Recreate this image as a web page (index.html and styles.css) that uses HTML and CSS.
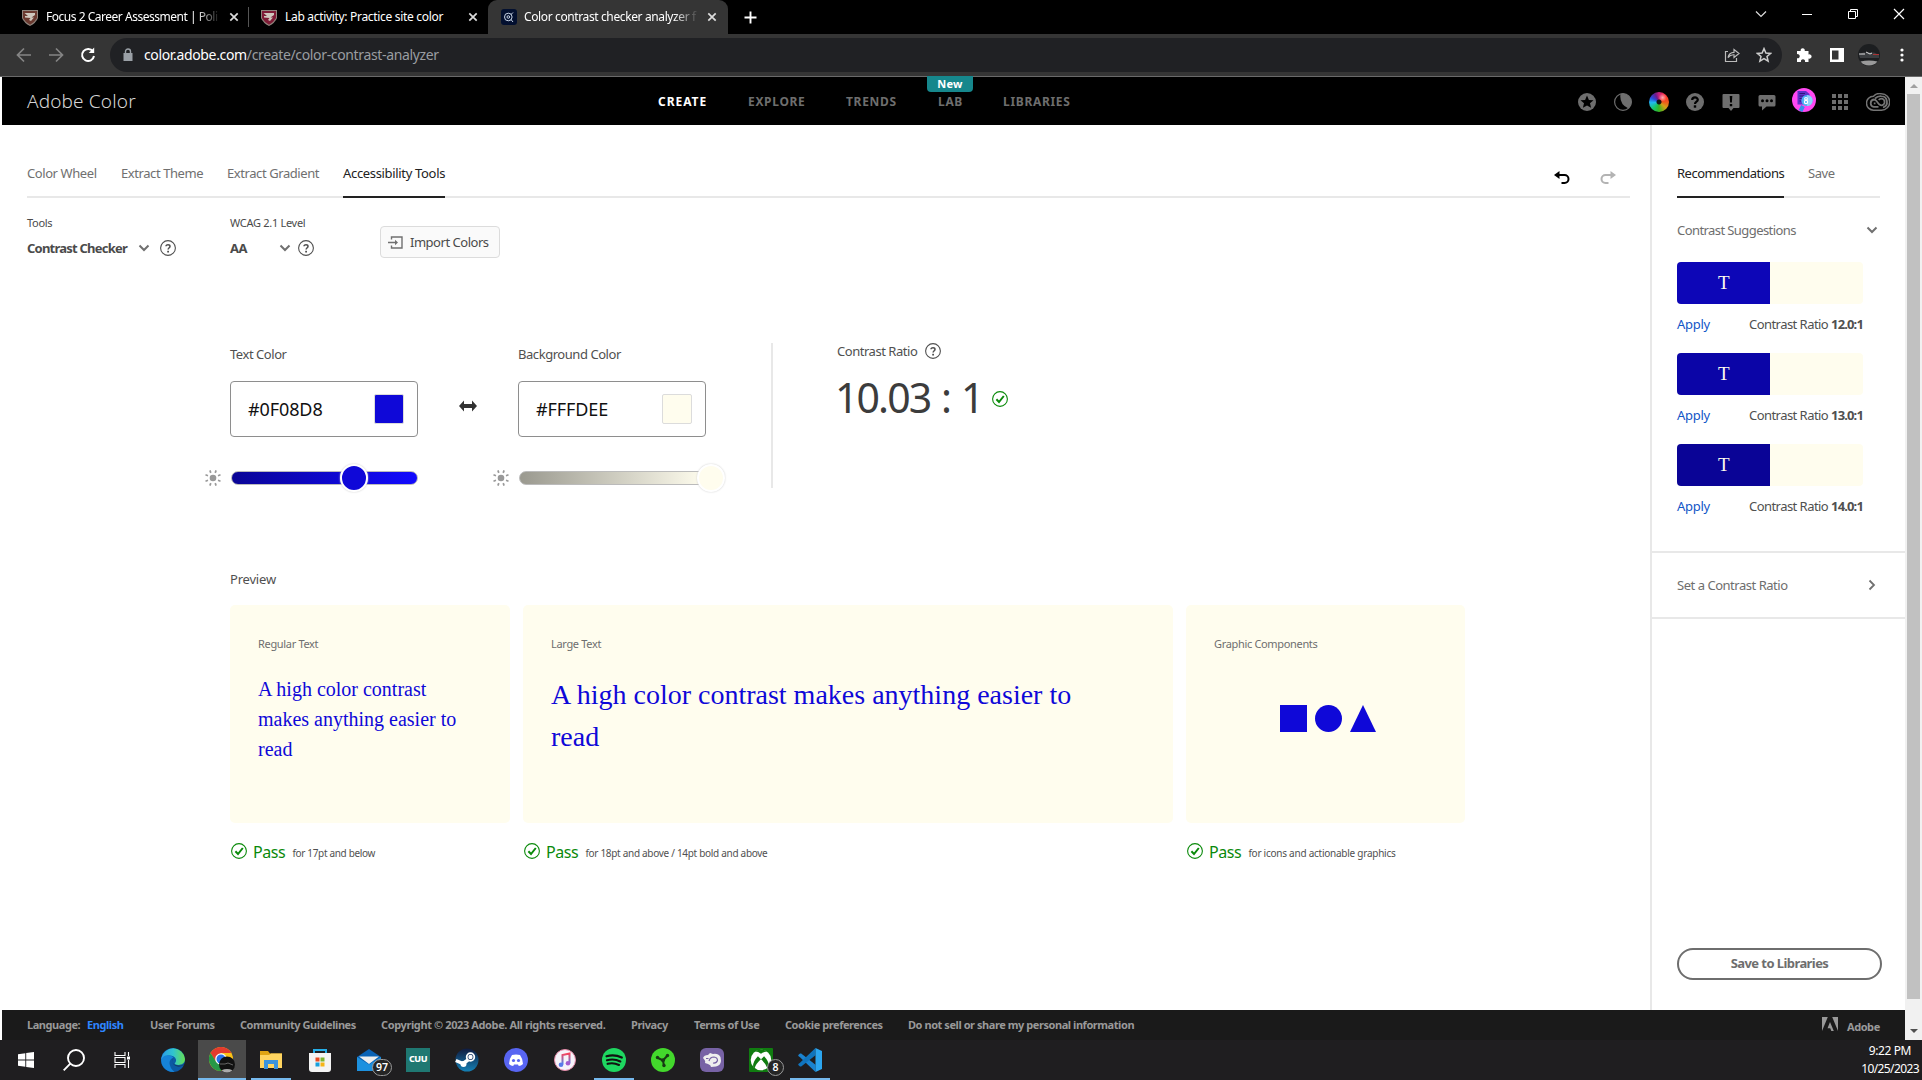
FILE: index.html
```html
<!DOCTYPE html>
<html lang="en">
<head>
<meta charset="utf-8">
<title>Color contrast checker analyzer</title>
<link rel="stylesheet" href="styles.css">
</head>
<body>
<svg width="0" height="0" class="defs">
  <symbol id="help" viewBox="0 0 16 16"><circle cx="8" cy="8" r="7.4" fill="none" stroke="#505050" stroke-width="1.1"/><path d="M6 6.3C6 4.3 10 4.3 10 6.4C10 7.7 8.1 7.8 8.1 9.6" fill="none" stroke="#505050" stroke-width="1.5"/><rect x="7.2" y="10.8" width="1.8" height="1.7" fill="#505050"/></symbol>
  <symbol id="check" viewBox="0 0 16 16"><circle cx="8" cy="8" r="7.4" fill="none" stroke="#0a8a0a" stroke-width="1.1"/><path d="M4.4 8.3L7 11L11.8 5" fill="none" stroke="#0a8a0a" stroke-width="2"/></symbol>
  <symbol id="chev" viewBox="0 0 12 8"><path d="M1.5 1.5L6 6L10.5 1.5" fill="none" stroke="#707070" stroke-width="2"/></symbol>
  <symbol id="sun" viewBox="0 0 16 16"><circle cx="8" cy="8" r="3.3" fill="#999"/><g stroke="#999" stroke-width="1.7"><path d="M5.8 2.9L4.9 .4M10.2 2.9L11.1 .4M13 5.700L15.500 4.800M13 10.300L15.500 11.200M3 5.700L.5 4.800M3 10.300L.5 11.200M5.800 13.100L4.900 15.600M10.200 13.100L11.100 15.600"/></g></symbol>
  <symbol id="x" viewBox="0 0 10 10"><path d="M1.3 1.3L8.7 8.7M8.7 1.3L1.3 8.7" stroke="currentColor" stroke-width="1.7"/></symbol>
  <symbol id="shield" viewBox="0 0 16 17"><path d="M0 1H16V9Q14 14 8 17Q2 14 0 9Z" fill="#8f857d"/><path d="M1 2H15V9Q13 13 8 15.800Q3 13 1 9Z" fill="currentColor"/><path d="M2.500 4H13V6L9.500 8.500H12L9 12L7 11L8.500 9L3 8.500V7H6Z" fill="#cfc8be"/></symbol>
</svg>

<header class="tabstrip">
  <div class="tab">
    <svg class="fav brown" width="16" height="17"><use href="#shield"/></svg>
    <span class="tab-title fade t1">Focus 2 Career Assessment | Poli</span>
    <svg class="close" width="10" height="10"><use href="#x"/></svg>
  </div>
  <div class="tab second">
    <svg class="fav red" width="16" height="17"><use href="#shield"/></svg>
    <span class="tab-title t2">Lab activity: Practice site color</span>
    <svg class="close" width="10" height="10"><use href="#x"/></svg>
  </div>
  <div class="tab active">
    <svg class="fav" width="16" height="16" viewBox="0 0 16 16"><rect width="16" height="16" rx="3" fill="#031030"/><circle cx="7.300" cy="8" r="3.800" fill="none" stroke="#c9d6e8" stroke-width="1"/><circle cx="7.300" cy="8" r="1.300" fill="none" stroke="#c9d6e8"/><path d="M10 5.500L12 3.500M10 10.500L12 13" stroke="#c9d6e8"/></svg>
    <span class="tab-title fade t3">Color contrast checker analyzer f</span>
    <svg class="close" width="10" height="10"><use href="#x"/></svg>
  </div>
  <svg class="newtab" width="13" height="13" viewBox="0 0 13 13"><path d="M6.500 0.500V12.500M.5 6.500H12.500" stroke="#fff" stroke-width="1.900"/></svg>
  <div class="winbtns">
    <svg width="12" height="12" viewBox="0 0 12 12"><path d="M1 3.500L6 8.500L11 3.500" fill="none" stroke="#ddd" stroke-width="1.200"/></svg>
    <svg width="12" height="12" viewBox="0 0 12 12"><path d="M1 6.500H11" stroke="#fff"/></svg>
    <svg width="12" height="12" viewBox="0 0 12 12"><path d="M1.500 3.500H8.500V10.500H1.500ZM3.500 3.500V1.500H10.500V8.500H8.500" fill="none" stroke="#fff"/></svg>
    <svg width="12" height="12" viewBox="0 0 12 12"><path d="M1 1L11 11M11 1L1 11" stroke="#fff" stroke-width="1.200"/></svg>
  </div>
</header>

<div class="toolbar">
  <svg width="16" height="16" viewBox="0 0 16 16" fill="none" stroke="#858585" stroke-width="1.700"><path d="M15 8H2M8 1.500L1.500 8L8 14.500"/></svg>
  <svg width="16" height="16" viewBox="0 0 16 16" fill="none" stroke="#858585" stroke-width="1.700"><path d="M1 8H14M8 1.500L14.500 8L8 14.500"/></svg>
  <svg width="16" height="16" viewBox="0 0 16 16" fill="none" stroke="#fff" stroke-width="2"><path d="M13 4.500A6 6 0 1 0 14 9"/><path d="M14.200 .5V6H8.700Z" fill="#fff" stroke="none"/></svg>
  <div class="omnibox">
    <svg width="12" height="14" viewBox="0 0 12 14"><path d="M1.500 5H10.500V13H1.500Z" fill="#9aa0a6"/><path d="M3.500 6V3.500A2.500 2.500 0 0 1 8.500 3.500V6" fill="none" stroke="#9aa0a6" stroke-width="1.400"/></svg>
    <span class="url"><b>color.adobe.com</b>/create/color-contrast-analyzer</span>
    <svg class="share" width="16" height="16" viewBox="0 0 16 16" fill="none" stroke="#bbb" stroke-width="1.200"><path d="M4 4.500H1.500V14.500H12.500V11M4 10.500Q5 5.500 10 5.300V2.500L15 6.500L10 10.500V7.800Q6.500 7.500 4 10.500Z"/></svg>
    <svg width="16" height="16" viewBox="0 0 16 16" fill="none" stroke="#ccc" stroke-width="1.500"><path d="M8 1.600L9.900 6L14.600 6.400L11 9.500L12.100 14.100L8 11.600L3.900 14.100L5 9.500L1.400 6.400L6.100 6Z"/></svg>
  </div>
  <svg width="16" height="16" viewBox="0 0 16 16" fill="#fff"><path d="M1 4H4.700A2.100 2.100 0 1 1 8.700 4H12.500V7.500A2.200 2.200 0 1 1 12.500 11.500V15H9A2.100 2.100 0 1 0 5 15H1V11.200A2.100 2.100 0 1 0 1 7.200Z"/></svg>
  <svg width="14" height="14" viewBox="0 0 14 14"><path d="M0 0H14V14H0ZM2 2.500V11.500H8.500V2.500Z" fill="#fff" fill-rule="evenodd"/></svg>
  <svg width="22" height="22" viewBox="0 0 22 22"><circle cx="11" cy="11" r="11" fill="#1c1e20"/><path d="M2.500 17.500A11 11 0 0 0 19.500 17.500Q11 15.500 2.500 17.500Z" fill="#9a9a9a"/><path d="M1 11L5 8.500H16L21 11V14L2 14Z" fill="#3a3d40"/><path d="M1 10H7M8 8L12 10L14 9" stroke="#ddd" fill="none"/><path d="M15 10.500H21" stroke="#a33"/></svg>
  <svg width="4" height="14" viewBox="0 0 4 14" fill="#fff"><circle cx="2" cy="2" r="1.600"/><circle cx="2" cy="7" r="1.600"/><circle cx="2" cy="12" r="1.600"/></svg>
</div>

<div class="viewport">
<div class="page">
  <header class="appbar">
    <span class="brand">Adobe Color</span>
    <nav class="nav">
      <span class="on">CREATE</span><span>EXPLORE</span><span>TRENDS</span><span class="lab">LAB<i class="new">New</i></span><span>LIBRARIES</span>
    </nav>
    <div class="appicons">
      <svg width="18" height="18" viewBox="0 0 18 18"><circle cx="9" cy="9" r="9" fill="#6e6e6e"/><path d="M9 2.500L10.900 6.900L15.500 7.200L12 10.200L13.100 14.800L9 12.400L4.900 14.800L6 10.200L2.500 7.200L7.100 6.900Z" fill="#000"/></svg>
      <svg width="18" height="18" viewBox="0 0 18 18"><circle cx="9" cy="9" r="8.400" fill="none" stroke="#6e6e6e" stroke-width="1.200"/><path d="M6.500 .8A8.600 8.600 0 0 1 14.500 15.500Q5 11.500 6.500 .8Z" fill="#6e6e6e"/></svg>
      <div class="wheel"></div>
      <svg width="18" height="18" viewBox="0 0 18 18"><circle cx="9" cy="9" r="9" fill="#6e6e6e"/><path d="M6.200 7C6.200 3.600 11.800 3.600 11.800 6.800C11.800 8.800 9 8.600 9 11" fill="none" stroke="#000" stroke-width="2.200"/><rect x="7.800" y="12.300" width="2.400" height="2.400" fill="#000"/></svg>
      <svg width="18" height="18" viewBox="0 0 18 18"><path d="M1.500 1H16.500Q17.500 1 17.500 2V14Q17.500 15 16.500 15H11.500L9 18L6.500 15H1.500Q.5 15 .5 14V2Q.5 1 1.500 1Z" fill="#6e6e6e"/><path d="M7.700 3H10.300L9.900 9.500H8.100ZM7.800 11H10.200V13.300H7.800Z" fill="#000"/></svg>
      <svg width="18" height="18" viewBox="0 0 18 18"><path d="M2 2H16Q17.500 2 17.500 3.500V12Q17.500 13.500 16 13.500H8.500L4 17.500V13.500H2Q.5 13.500 .5 12V3.500Q.5 2 2 2Z" fill="#6e6e6e"/><circle cx="4.500" cy="7.700" r="1.500"/><circle cx="9" cy="7.700" r="1.500"/><circle cx="13.500" cy="7.700" r="1.500"/></svg>
      <svg class="avatar" width="24" height="24" viewBox="0 0 24 24"><circle cx="12" cy="12" r="12" fill="#ff48f2"/><path d="M5.500 3H14L17.500 6V16.500H5.500Z" fill="#5f32c9"/><path d="M7.500 5.500H13M7.500 8H12M7.500 10.500H10M7.500 13H9" stroke="#2b1679"/><path d="M11 18L8.500 23" stroke="#388eea" stroke-width="4"/><circle cx="15" cy="12.500" r="5.600" fill="#4db1f5"/><path d="M15 6.900A5.600 5.600 0 0 1 15 18.100Z" fill="#8fd0fa"/><circle cx="14" cy="10.800" r="1.300" fill="none" stroke="#fff" stroke-width="1.200"/><circle cx="14" cy="14" r="1.600" fill="none" stroke="#fff" stroke-width="1.200"/></svg>
      <svg width="16" height="16" viewBox="0 0 16 16" fill="#6e6e6e"><path d="M0 0H4V4H0ZM6 0H10V4H6ZM12 0H16V4H12ZM0 6H4V10H0ZM6 6H10V10H6ZM12 6H16V10H12ZM0 12H4V16H0ZM6 12H10V16H6ZM12 12H16V16H12Z"/></svg>
      <svg class="cc" width="24" height="18" viewBox="0 0 24 18" fill="none" stroke="#757575"><path d="M7.500 17.200A7 7 0 0 1 7.500 3.200A8.200 8.200 0 0 1 15.500 .8A8.200 8.200 0 0 1 15.500 17.200Z" stroke-width="1.500"/><path d="M12.500 13.800H7.800A3.700 3.700 0 0 1 7.800 6.500Q9.300 6.500 10.500 8L13 11.200Q14 12.300 15.300 12.300A3.300 3.300 0 0 0 15.300 5.700Q13.800 5.700 12.700 7M9 5.500Q11.500 3 15.300 3.200A5.800 5.800 0 0 1 17 14.500M7.800 10.400H9.500" stroke-width="1.800"/></svg>
    </div>
  </header>

  <div class="body">
    <main class="main">
      <nav class="tabs">
        <span>Color Wheel</span><span>Extract Theme</span><span>Extract Gradient</span><span class="on">Accessibility Tools</span>
        <div class="history">
          <svg width="16" height="13" viewBox="0 0 16 13"><path d="M3 4H10.500A4 4 0 0 1 10.500 12H7.500" fill="none" stroke="#000" stroke-width="2"/><path d="M5.500 0V8L0 4Z"/></svg>
          <svg width="16" height="13" viewBox="0 0 16 13"><path d="M13 4H5.500A4 4 0 0 0 5.500 12H8.500" fill="none" stroke="#b3b3b3" stroke-width="2"/><path d="M10.500 0V8L16 4Z" fill="#b3b3b3"/></svg>
        </div>
      </nav>

      <section class="options">
        <div class="option tools">
          <label>Tools</label>
          <div class="select"><b>Contrast Checker</b><svg width="12" height="8"><use href="#chev"/></svg><svg width="16" height="16"><use href="#help"/></svg></div>
        </div>
        <div class="option level">
          <label>WCAG 2.1 Level</label>
          <div class="select"><b>AA</b><svg width="12" height="8"><use href="#chev"/></svg><svg width="16" height="16"><use href="#help"/></svg></div>
        </div>
        <button class="import"><svg width="15" height="13" viewBox="0 0 15 13" fill="none" stroke="#707070" stroke-width="1.400"><path d="M3.500 3.500V1H14V12H3.500V9.500M0 6.500H8"/><path d="M7 3.800L10 6.500L7 9.200Z" fill="#707070" stroke="none"/></svg>Import Colors</button>
      </section>

      <section class="checker">
        <div class="color">
          <label>Text Color</label>
          <div class="field"><span>#0F08D8</span><i class="swatch ink"></i></div>
          <div class="slider"><svg width="16" height="16"><use href="#sun"/></svg><div class="track blue"><i class="knob"></i></div></div>
        </div>
        <svg class="swap" width="18" height="12" viewBox="0 0 18 12"><path d="M0 6L5 .5V4H13V.5L18 6L13 11.500V8H5V11.500Z" fill="#323232"/></svg>
        <div class="color">
          <label>Background Color</label>
          <div class="field"><span>#FFFDEE</span><i class="swatch paper"></i></div>
          <div class="slider"><svg width="16" height="16"><use href="#sun"/></svg><div class="track cream"><i class="knob"></i></div></div>
        </div>
        <div class="ratio">
          <div class="ratio-label">Contrast Ratio<svg width="16" height="16"><use href="#help"/></svg></div>
          <div class="ratio-value"><span>10.03 : 1</span><svg width="16" height="16"><use href="#check"/></svg></div>
        </div>
      </section>

      <section class="preview">
        <h2>Preview</h2>
        <div class="cards">
          <div>
            <div class="card"><label>Regular Text</label><p class="regular">A high color contrast makes anything easier to read</p></div>
            <div class="result"><svg width="16" height="16"><use href="#check"/></svg><strong>Pass</strong><span class="r1">for 17pt and below</span></div>
          </div>
          <div>
            <div class="card"><label>Large Text</label><p class="large">A high color contrast makes anything easier to read</p></div>
            <div class="result"><svg width="16" height="16"><use href="#check"/></svg><strong>Pass</strong><span class="r2">for 18pt and above / 14pt bold and above</span></div>
          </div>
          <div>
            <div class="card"><label>Graphic Components</label>
              <svg class="shapes" width="96" height="27" viewBox="0 0 96 27" fill="#0f08d8"><rect width="27" height="27"/><circle cx="48.500" cy="13.500" r="13.500"/><path d="M83 0L96 27H70Z"/></svg></div>
            <div class="result"><svg width="16" height="16"><use href="#check"/></svg><strong>Pass</strong><span class="r3">for icons and actionable graphics</span></div>
          </div>
        </div>
      </section>
    </main>

    <aside class="side">
      <nav class="tabs"><span class="on">Recommendations</span><span>Save</span></nav>
      <div class="suggest-head">Contrast Suggestions<svg width="12" height="8"><use href="#chev"/></svg></div>
      <div class="suggestion"><div class="pair s12"><span>T</span></div><div class="meta"><a>Apply</a><span>Contrast Ratio <b>12.0:1</b></span></div></div>
      <div class="suggestion"><div class="pair s13"><span>T</span></div><div class="meta"><a>Apply</a><span>Contrast Ratio <b>13.0:1</b></span></div></div>
      <div class="suggestion"><div class="pair s14"><span>T</span></div><div class="meta"><a>Apply</a><span>Contrast Ratio <b>14.0:1</b></span></div></div>
      <div class="setratio">Set a Contrast Ratio<svg width="8" height="12" viewBox="0 0 8 12"><path d="M1.500 1.500L6 6L1.500 10.500" fill="none" stroke="#707070" stroke-width="1.800"/></svg></div>
      <button class="save">Save to Libraries</button>
    </aside>
  </div>

  <footer class="foot">
    <span>Language:</span><span class="lang">English</span><span>User Forums</span><span>Community Guidelines</span><span class="legal">Copyright © 2023 Adobe. All rights reserved.</span><span>Privacy</span><span>Terms of Use</span><span>Cookie preferences</span><span>Do not sell or share my personal information</span>
    <svg width="16" height="14" viewBox="0 0 16 14" fill="#999"><path d="M0 0H5.800L0 14ZM10.200 0H16V14ZM8 5L11.800 14H9.300L8.200 11.200H5.500Z"/></svg><span class="corp">Adobe</span>
  </footer>
</div>
<div class="scroll"><i class="up"></i><div class="thumb"></div><i class="down"></i></div>
</div>

<div class="taskbar">
  <div class="apps">
  <div class="app"><svg width="16" height="16" viewBox="0 0 16 16" fill="#fff"><path d="M0 2.200L7.300 1.200V7.500H0ZM8.200 1.100L16 0V7.500H8.200ZM0 8.400H7.300V14.800L0 13.800ZM8.200 8.400H16V16L8.200 14.900Z"/></svg></div>
  <div class="app"><svg width="22" height="22" viewBox="0 0 22 22" fill="none" stroke="#fff" stroke-width="1.900"><circle cx="13" cy="9" r="8"/><path d="M7.300 14.700L.7 21.300"/></svg></div>
  <div class="app view"><svg width="17" height="16" viewBox="0 0 17 16" fill="none" stroke="#fff" stroke-width="1.100"><path d="M1 0V3.500H11V0M1 16V12.500H11V16M1 5.500H11V10.500H1ZM14.500 0V4M14.500 8V16"/><path d="M13 4.500H16V7.500H13Z" fill="#fff" stroke="none"/></svg></div>
  <div class="app"><svg width="24" height="24" viewBox="0 0 24 24"><defs><linearGradient id="eg"><stop offset="0" stop-color="#2b9be8"/><stop offset=".5" stop-color="#30c4cf"/><stop offset="1" stop-color="#66df52"/></linearGradient></defs><circle cx="12" cy="12" r="12" fill="#0c59a4"/><path d="M.3 10A12 12 0 0 1 24 11C24 17 17 18 14 16C13 15.200 15.500 14.500 15 11.500C14 7 7 6.500 3 9Q1 10.300 .3 12Z" fill="url(#eg)"/><path d="M.1 12C1.500 6.500 9 6 12.500 9.500Q8.500 11 8.500 15Q8.700 20 13.500 23.900Q7 24.500 2.700 19.500Q0 16 .1 12Z" fill="#1683d8"/><path d="M12.500 9.500Q10.500 12 11.500 14.500Q14 19 22 17.200L23.500 15.500V17Q18 19.500 14 17.500Q9.500 14.500 12.500 9.500Z" fill="#1f1e20" opacity=".75"/></svg></div>
  <div class="app open current"><svg width="26" height="26" viewBox="0 0 26 26"><circle cx="12" cy="12" r="12" fill="#fbc116"/><path d="M1.600 6A12 12 0 0 1 22.400 6H12L7 15Z" fill="#e33b2e"/><path d="M1.600 6A12 12 0 0 0 12 24L17.500 14.500H7Z" fill="#279847"/><circle cx="12" cy="12" r="5.800" fill="#fff"/><circle cx="12" cy="12" r="4.500" fill="#2870e8"/><circle cx="18" cy="17.500" r="8" fill="#111"/><path d="M12.500 23.200A8 8 0 0 0 23.500 23.200Q18 21 12.500 23.200Z" fill="#aaa"/><path d="M11 17H16L19 16L24 18" stroke="#666" fill="none"/></svg></div>
  <div class="app open"><svg width="22" height="20" viewBox="0 0 22 20"><path d="M0 1H8L10 3.500H22V18H0Z" fill="#e0a514"/><path d="M0 5H9L11 3.500H22V18H0Z" fill="#ffd560"/><path d="M4 19V10H18V19H14V14H8V19Z" fill="#3b94dd"/></svg></div>
  <div class="app"><svg width="24" height="24" viewBox="0 0 24 24"><path d="M6 6V2H18V6" fill="none" stroke="#25aee8" stroke-width="2"/><path d="M1 5H23V21Q23 24 20 24H4Q1 24 1 21Z" fill="#f4f4f4"/><path d="M7.500 9.500H11.500V13.500H7.500Z" fill="#e74b22"/><path d="M12.500 9.500H16.500V13.500H12.500Z" fill="#7eb52e"/><path d="M7.500 14.500H11.500V18.500H7.500Z" fill="#17a0dd"/><path d="M12.500 14.500H16.500V18.500H12.500Z" fill="#f6b516"/></svg></div>
  <div class="app"><svg width="24" height="22" viewBox="0 0 24 22"><path d="M0 8L12 0L24 8V22H0Z" fill="#0a62b4"/><path d="M2 7.500H22L12 15Z" fill="#eee"/><path d="M0 8L12 15.500L24 8V22H0Z" fill="#1d91df"/></svg><i class="badge mail">97</i></div>
  <div class="app"><div class="cuu">CUU</div></div>
  <div class="app"><svg width="24" height="24" viewBox="0 0 24 24"><defs><linearGradient id="sg" x2="0" y2="1"><stop offset="0" stop-color="#101b3f"/><stop offset="1" stop-color="#1480b5"/></linearGradient></defs><circle cx="12" cy="12" r="11.500" fill="url(#sg)"/><path d="M.8 12.500L8 15.500L13 12" stroke="#fff" stroke-width="3.500" fill="none"/><circle cx="8.500" cy="16" r="3" fill="#fff"/><circle cx="15.500" cy="9" r="3.800" fill="#1b3a67" stroke="#fff" stroke-width="1.800"/><circle cx="15.500" cy="9" r="2.200" fill="#fff"/></svg></div>
  <div class="app"><svg width="24" height="24" viewBox="0 0 24 24"><circle cx="12" cy="12" r="12" fill="#5865f2"/><path d="M8 7Q12 5.800 16 7Q19 11 19 16Q17 18 14.800 18L14 16.500H10L9.200 18Q7 18 5 16Q5 11 8 7Z" fill="#fff"/><circle cx="9.500" cy="12.500" r="1.600" fill="#5865f2"/><circle cx="14.500" cy="12.500" r="1.600" fill="#5865f2"/></svg></div>
  <div class="app"><svg width="22" height="22" viewBox="0 0 22 22"><defs><linearGradient id="mg" x2="0" y2="1"><stop offset="0" stop-color="#f8435c"/><stop offset="1" stop-color="#4a8bf0"/></linearGradient></defs><circle cx="11" cy="11" r="10.500" fill="#f6f3fa" stroke="#e58aa8"/><path d="M8.500 15.500V6L15.500 4.500V14" fill="none" stroke="url(#mg)" stroke-width="2"/><circle cx="7" cy="15.800" r="2.300" fill="#5a7bea"/><circle cx="14" cy="14.300" r="2.300" fill="#a45bd0"/></svg></div>
  <div class="app open"><svg width="24" height="24" viewBox="0 0 24 24"><circle cx="12" cy="12" r="12" fill="#1ed760"/><path d="M4.500 8.300Q12.500 6 19.800 9.600M5 12.200Q12 10.300 18.300 13.400M5.600 15.800Q11.500 14.300 17 16.900" fill="none" stroke="#111" stroke-width="2.200" stroke-linecap="round"/></svg></div>
  <div class="app"><svg width="24" height="24" viewBox="0 0 24 24"><circle cx="12" cy="12" r="12" fill="#43d82c"/><path d="M6 9.500L12 12.500L16.500 7.500M12 12.500L13 18" fill="none" stroke="#183a14" stroke-width="2"/><circle cx="6.500" cy="9.500" r="1.700" fill="#183a14"/><circle cx="16.500" cy="7.500" r="1.700" fill="#183a14"/><circle cx="13" cy="17.500" r="1.700" fill="#183a14"/><circle cx="12" cy="12.300" r="2" fill="#183a14"/></svg></div>
  <div class="app"><svg width="24" height="24" viewBox="0 0 24 24"><rect width="24" height="24" rx="6" fill="#7762a5"/><path d="M3 10Q4 7 8 7L10 5L13 6Q18 5 20.500 9L21 13Q20.500 17.500 16 18.500L11 19Q11 17 8 16L5 15Q6 13 3 10Z" fill="#eee"/><path d="M6 10.500H8.500M9 13Q10 9 14 9Q17.500 9.500 17.500 12.500Q16.500 15.500 13 15" fill="none" stroke="#7762a5" stroke-width="1.200"/></svg></div>
  <div class="app"><svg width="24" height="24" viewBox="0 0 24 24"><rect width="24" height="24" rx="1" fill="#107c10"/><circle cx="12" cy="12" r="10.300" fill="#fff"/><path d="M6 3.600Q9 3.500 12 5.800Q15 3.500 18 3.600Q15.500 1.500 12 1.500Q8.500 1.500 6 3.600Z" fill="#107c10"/><path d="M8.900 8.300Q3.500 14 4.200 19L5.500 20.500Q7 15.500 12 11.300Q17 15.500 18.500 20.500L19.800 19Q20.500 14 15.100 8.300L12 11.300Z" fill="#107c10"/></svg><i class="badge">8</i></div>
  <div class="app open"><svg width="24" height="24" viewBox="0 0 24 24"><path d="M17.500 24L2 9.300L.3 8V7L2 5.500H3.200L17.500 16.800Z" fill="#1a83d0"/><path d="M17.500 0L2 14.700L.3 16V17L2 18.500H3.200L17.500 7.200Z" fill="#1074bd"/><path d="M17.500 0L24 3V21L17.500 24Z" fill="#2ca6f0"/></svg></div>
  </div>
  <div class="clock"><span class="time">9:22 PM</span><span class="date">10/25/2023</span></div>
</div>
</body>
</html>
```
FILE: styles.css
```css
* { box-sizing: border-box; }
body { margin: 0; width: 1922px; height: 1080px; overflow: hidden; background: #fff; font: 13px/18px "Noto Sans", sans-serif; letter-spacing: -.42px; color: #505050; white-space: nowrap; }
svg { display: block; flex: none; }
i { font-style: normal; }
h2, p { margin: 0; font-weight: 400; }
.defs { position: absolute; }

/* Browser chrome */
.tabstrip { height: 34px; background: #000; display: flex; align-items: center; color: #fff; font-size: 12px; }
.tab { width: 240px; height: 34px; margin-left: 10px; padding: 0 10px 0 12px; display: flex; align-items: center; border-right: 1px solid transparent; }
.tab .fav { margin-right: 8px; }
.tab .close { margin-left: auto; color: #ddd; }
.tab:first-child { background: linear-gradient(#555, #555) right 50% / 1px 20px no-repeat; }
.tab.second { margin-left: 0; padding: 0 11px 0 11px; }
.tab.active { margin: 0 0 0 -2px; padding-right: 10px; background: #353535; border-radius: 9px 9px 0 0; width: 240px; }
.tab.active .fav { margin-left: 1px; margin-right: 7px; }
.tab-title { letter-spacing: -.35px; }
.t1 { width: 173px; letter-spacing: -.48px; }
.t2 { letter-spacing: -.31px; }
.t3 { width: 176px; letter-spacing: -.38px; }
.fade { -webkit-mask: linear-gradient(90deg, #000 150px, transparent 175px); mask: linear-gradient(90deg, #000 150px, transparent 175px); }
.brown { color: #6b3a30; }
.red { color: #7e1c36; }
.newtab { margin-left: 16px; }
.winbtns { margin: -6px 17px 0 auto; display: flex; gap: 34px; }
.toolbar { height: 43px; background: #353535; border-bottom: 1px solid #6a6a6a; display: flex; align-items: center; padding: 0 20px 0 16px; }
.toolbar > svg:nth-child(2) { margin: 0 16px 0 16px; }
.omnibox { width: 1672px; height: 34px; margin: 0 14px 0 14px; border-radius: 17px; background: #202124; display: flex; align-items: center; padding: 0 10px 0 12px; font-size: 14px; color: #9a9da1; letter-spacing: -.35px; }
.omnibox .url { margin-left: 10px; }
.omnibox b { font-weight: 400; color: #fff; }
.omnibox .share { margin: 0 16px 0 auto; }
.omnibox { flex: none; }
.omnibox + svg + svg { margin: 0 14px 0 18px; }
.omnibox + svg + svg + svg + svg { margin-left: 20px; }

.viewport { height: 963px; display: flex; padding-left: 2px; }
.page { width: 1903px; display: flex; flex-direction: column; }
.scroll { width: 17px; background: #f1f1f1; display: flex; flex-direction: column; align-items: center; }
.scroll .thumb { width: 13px; height: 905px; background: #c1c1c1; }
.scroll i { border: 4px solid transparent; }
.scroll .up { border-bottom-color: #a0a0a0; margin: 3px 0 6px; }
.scroll .down { border-top-color: #505050; margin-top: 30px; }

/* App header */
.appbar { height: 48px; background: #000; display: flex; align-items: center; }
.brand { width: 631px; padding-left: 25px; font-size: 19px; font-weight: 300; letter-spacing: .15px; color: #d5d5d5; }
.nav { display: grid; grid-template-columns: 90px 98px 92px 65px 70px; padding-left: 25px; font-size: 12px; font-weight: 700; letter-spacing: .68px; color: #6e6e6e; position: relative; top: 1px; }
.nav .on { color: #fff; letter-spacing: .95px; }
.lab { position: relative; }
.new { position: absolute; left: -11px; top: -17px; width: 46px; height: 16px; border-radius: 0 0 4px 4px; background: #16878c; color: #fff; font-size: 11px; line-height: 15px; letter-spacing: .2px; text-align: center; }
.appicons { display: flex; align-items: center; gap: 18px; margin: 2px 15px 0 auto; }
.wheel { width: 20px; height: 20px; margin: 0 -1px; border-radius: 50%; background: radial-gradient(circle, #111 2px, transparent 3px), radial-gradient(circle at 68% 28%, #fff9 0, transparent 4px), conic-gradient(from 0deg, #c8207a, #f33, #f0571c 90deg, #d4a017 130deg, #37b422 180deg, #16c76c 220deg, #21b9ee 265deg, #2947d9 300deg, #6b1a8b 335deg, #c8207a); }
.avatar { margin: -4px -2px 0 -2px; }
.appicons .avatar ~ svg { margin-left: 0; }
.appicons .cc { margin-left: -4px; }

/* Content */
.body { flex: 1; display: flex; }
.main { width: 1648px; padding: 0 20px 0 25px; }
.tabs { height: 73px; border-bottom: 2px solid #e8e8e8; display: flex; padding-top: 39px; gap: 24px; color: #707070; }
.tabs span { height: 34px; }
.tabs .on { color: #222; border-bottom: 2px solid #222; }
.tabs span:nth-child(1) { width: 70px; }
.tabs span:nth-child(2) { width: 82px; }
.tabs span:nth-child(3) { width: 92px; }
.tabs span:nth-child(4) { width: 102px; letter-spacing: -.33px; }
.history { margin: 7px 14px 0 auto; display: flex; gap: 30px; }
.options { display: flex; height: 76px; padding-top: 16px; color: #4b4b4b; }
.option label { display: block; font-size: 11px; letter-spacing: -.3px; }
.tools { width: 203px; }
.level { width: 150px; }
.select { display: flex; align-items: center; height: 18px; margin-top: 7px; }
.select b { letter-spacing: -.77px; width: 111px; }
.select svg + svg { margin-left: 10px; }
.level b { width: 49px; letter-spacing: -.4px; }
.level .select svg + svg { margin-left: 7px; }
button { font: inherit; letter-spacing: inherit; color: inherit; }
.import { width: 120px; height: 32px; margin-top: 12px; padding: 0 0 0 7px; border: 1px solid #dcdcdc; border-radius: 4px; background: #fafafa; display: flex; align-items: center; gap: 7px; letter-spacing: -.48px; }

.checker { display: flex; padding: 71px 0 0 203px; height: 278px; }
.color { width: 188px; }
.color label { display: block; letter-spacing: -.45px; }
.field { width: 188px; height: 56px; margin-top: 18px; border: 1px solid #8e8e8e; border-radius: 4px; display: flex; align-items: center; justify-content: space-between; padding: 0 13px 0 17px; color: #111; font-size: 18px; letter-spacing: -.1px; }
.swatch { width: 30px; height: 30px; border: 1px solid #dcdcdc; border-radius: 2px; }
.ink { background: #0f08d8; }
.paper { background: #fffdee; }
.slider { display: flex; align-items: center; margin: 33px 0 0 -25px; gap: 10px; }
.track { flex: none; width: 187px; height: 14px; border: 1px solid #bbb; border-radius: 7px; position: relative; }
.blue { background: linear-gradient(90deg, #0a0596, #120aff); }
.cream { background: linear-gradient(90deg, #9a998f, #fffdee); }
.knob { position: absolute; top: -8px; left: 108px; width: 28px; height: 28px; border: 2px solid #fff; border-radius: 50%; background: #0f08d8; box-shadow: 0 0 2px #ccc; }
.cream .knob { left: 177px; background: #fffdee; }
.swap { margin: 55px 41px 0; }
.ratio { margin: -2px 0 0 65px; height: 145px; border-left: 2px solid #e8e8e8; padding-left: 64px; }
.ratio-label { display: flex; gap: 8px; margin-top: -1px; padding-top: 0; letter-spacing: -.46px; }
.ratio-label svg { margin-top: 1px; }
.ratio-value { display: flex; align-items: center; color: #3c3c3c; margin-top: 9px; }
.ratio-value span { width: 157px; margin-left: -2px; font-size: 41px; line-height: 56px; font-weight: 400; letter-spacing: -1.9px; word-spacing: 2px; }
.ratio-value svg { margin-top: 3px; }

.preview { padding-left: 203px; margin-top: 18px; }
.preview h2 { font-size: 13px; letter-spacing: -.2px; }
.cards { display: grid; grid-template-columns: 280px 650px 279px; column-gap: 13px; margin-top: 17px; }
.card { height: 218px; padding: 30px 28px 0; border-radius: 5px; background: #fffdee; white-space: normal; }
.card label { display: block; font-size: 11px; letter-spacing: -.33px; color: #6e6e6e; }
.card p { font-family: "Liberation Serif", serif; color: #0f08d8; letter-spacing: 0; }
.regular { font-size: 20px; line-height: 30px; margin-top: 21px; }
.large { font-size: 28px; line-height: 42px; margin-top: 21px; padding-right: 60px; }
.shapes { margin: 52px 0 0 66px; }
.result { display: flex; align-items: center; height: 20px; margin-top: 18px; padding-left: 1px; font-size: 10px; letter-spacing: -.33px; }
.result strong { margin: 1px 7px 0 6px; font-size: 16px; font-weight: 400; color: #0a8a0a; letter-spacing: -.4px; }
.result span { margin-top: 3px; }
.result .r2 { letter-spacing: -.3px; }
.result .r3 { letter-spacing: -.25px; }

/* Sidebar */
.side { width: 255px; border-left: 2px solid #e8e8e8; padding-left: 25px; display: flex; flex-direction: column; }
.side .tabs { width: 203px; flex: none; }
.side .tabs span:nth-child(1) { width: 107px; letter-spacing: -.5px; }
.side .tabs span:nth-child(2) { width: 28px; }
.suggest-head { display: flex; justify-content: space-between; align-items: center; width: 201px; margin: 23px 0 23px; color: #6e6e6e; letter-spacing: -.58px; }
.suggestion { width: 186px; height: 91px; }
.pair { height: 42px; border-radius: 4px; overflow: hidden; display: grid; grid-template-columns: 1fr 1fr; background: #fffdee; }
.pair span { background: #0d06b7; color: #fffdee; font: 19px/42px "Liberation Serif", serif; text-align: center; }
.s13 span { background: #0b05a7; }
.s14 span { background: #0a0496; }
.meta { display: flex; justify-content: space-between; margin-top: 11px; letter-spacing: -.54px; }
.meta a { color: #1256c7; letter-spacing: -.3px; }
.meta b { letter-spacing: -.85px; }
.setratio { height: 68px; margin: 16px 0 0 -25px; padding: 0 29px 0 25px; border: solid #e8e8e8; border-width: 2px 0; display: flex; align-items: center; justify-content: space-between; color: #6e6e6e; letter-spacing: -.47px; }
.save { width: 205px; height: 32px; margin: auto 0 30px; border: 2px solid #6e6e6e; border-radius: 16px; background: #fff; color: #6e6e6e; font-weight: 700; line-height: 26px; padding: 0 0 2px; letter-spacing: -.57px; }

.foot { height: 30px; background: #1a1a1a; color: #999; font-size: 11px; font-weight: 700; letter-spacing: -.44px; display: grid; grid-template-columns: 60px 63px 90px 141px 250px 63px 91px 123px 914px 25px 40px; align-items: center; padding-left: 25px; }
.foot .lang { color: #2e86ff; }
.foot .legal { letter-spacing: -.39px; }
.foot .corp { margin-top: 3px; }
.foot svg { margin-top: -2px; }

/* Taskbar */
.taskbar { height: 40px; background: #1f1e20; display: flex; justify-content: space-between; }
.apps { display: flex; padding-left: 2px; }
.app { width: 48px; height: 40px; margin-right: 1px; display: flex; align-items: center; justify-content: center; position: relative; }
.app:nth-child(2) { margin: 0 0 0 -1px; }
.app.view { margin-right: 3px; }
.open { background: linear-gradient(#76b9ed, #76b9ed) 50% 100% / 40px 2px no-repeat; }
.app.current { background: linear-gradient(#76b9ed, #76b9ed) 50% 100% / 48px 2px no-repeat #4a4a4a; }
.badge { position: absolute; left: 30px; top: 19px; height: 17px; min-width: 17px; border: 1px solid #999; border-radius: 9px; background: #252525; color: #fff; font: 600 10.500px/15px "Noto Sans", sans-serif; text-align: center; letter-spacing: 0; }
.mail { left: 27px; width: 20px; }
.cuu { width: 24px; height: 24px; background: #1f7872; color: #fff; font: 800 9px/22px "Noto Sans", sans-serif; letter-spacing: -.4px; text-align: center; }
.clock { width: 57px; margin-right: 3px; color: #fff; font-size: 12px; letter-spacing: -.6px; padding-top: 2px; display: flex; flex-direction: column; align-items: flex-end; }
.time { margin-right: 8px; letter-spacing: -.4px; }
```
